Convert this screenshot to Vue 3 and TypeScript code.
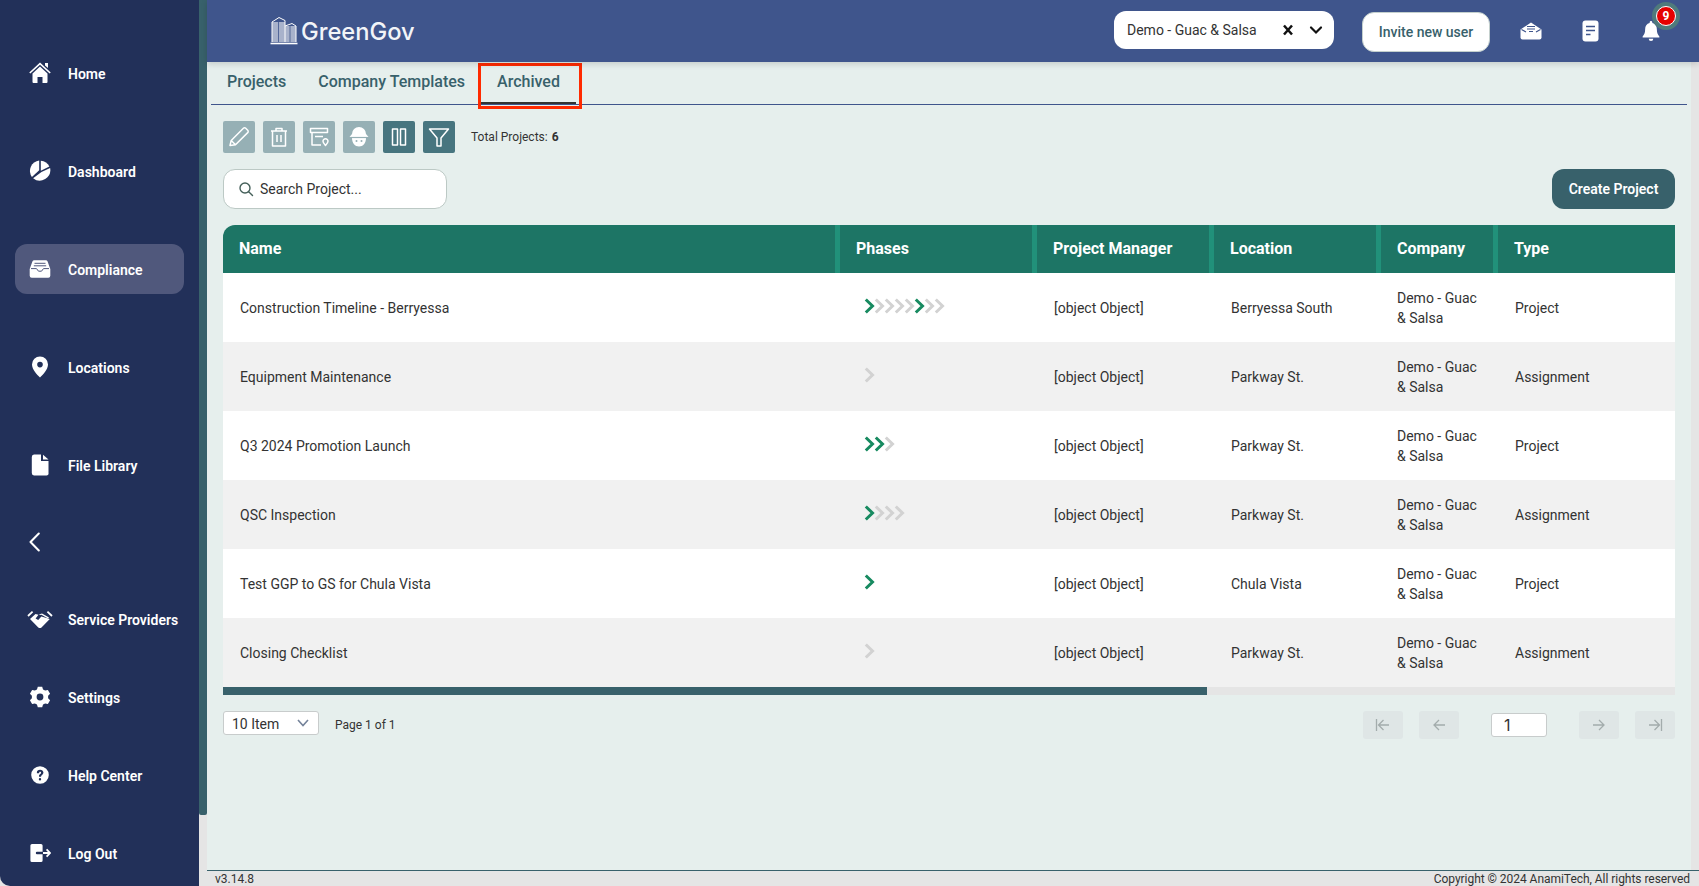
<script setup lang="ts">
type Shape = { d: string; kind?: 'fill' | 'stroke' };
type NavItem = { label: string; active?: boolean; w: number; h: number; shapes: Shape[] };
function gear(): string {
  const c = 11, out = 10.6, inn = 8.2;
  let d = '';
  const n = 6;
  for (let i = 0; i < n; i++) {
    const a = (i / n) * Math.PI * 2 - Math.PI / 2;
    const w = Math.PI / n;
    const pts = [
      [inn, a - w * 0.72], [out, a - w * 0.4], [out, a + w * 0.4], [inn, a + w * 0.72],
    ];
    for (const [r, t] of pts) {
      d += `${d ? 'L' : 'M'}${(c + r * Math.cos(t)).toFixed(2)} ${(c + r * Math.sin(t)).toFixed(2)}`;
    }
  }
  return d + 'Z';
}
const navTop: NavItem[] = [
  { label: 'Home', w: 22, h: 22, shapes: [
    { d: 'M3.5 11.6 11 4.6l7.5 7V20a1 1 0 0 1-1 1h-4v-6h-5v6h-4a1 1 0 0 1-1-1z' },
    { d: 'M.8 11 11 1.6 21.2 11', kind: 'stroke' },
    { d: 'M16 1h3v5l-3-2.6z' },
  ] },
  { label: 'Dashboard', w: 22, h: 22, shapes: [
    { d: 'M10.2 .5v9.8L2.9 17A10.5 10.5 0 0 1 10.2 .5z' },
    { d: 'M11.8 .7a10.5 10.5 0 0 1 8.6 5.9l-8.6 4.2z' },
    { d: 'M21.1 8a10.6 10.6 0 0 1-17 10.3l8.4-6.3z' },
  ] },
  { label: 'Compliance', active: true, w: 22, h: 18, shapes: [
    { d: 'M3.4 1.600A2 2 0 0 1 5.400 .2h11.200a2 2 0 0 1 2 1.400l2.700 7.400v6.800a2 2 0 0 1-2 2H2.700a2 2 0 0 1-2-2V9z' },
    { d: 'M5.500 3.300h11M4.800 5.800h12.400M2 8.600h5.500l2 2.600h3l2-2.600H20', kind: 'stroke' },
  ] },
  { label: 'Locations', w: 22, h: 22, shapes: [
    { d: 'M11 .5a8 8 0 0 1 8 8c0 5-5 10-8 13-3-3-8-8-8-13a8 8 0 0 1 8-8z M11 5.8a2.8 2.8 0 1 0 0 5.6 2.8 2.8 0 0 0 0-5.6z' },
  ] },
  { label: 'File Library', w: 22, h: 22, shapes: [
    { d: 'M5 .5h7v6.500h7.500V19a2 2 0 0 1-2 2.500H5A2.500 2.500 0 0 1 2.800 19V3A2.500 2.500 0 0 1 5 .5z' },
    { d: 'M14 .8l5.500 4.700H14z' },
  ] },
];
const navBottom: NavItem[] = [
  { label: 'Service Providers', w: 26, h: 20, shapes: [
    { d: 'M1 7 5.600 2.600M25 7l-4.600-4.400', kind: 'stroke' },
    { d: 'M3 10 8.500 5l3 .8L8.600 9.600l2.600 1.400 3.200-3.600L22.800 10 14.500 18.400a2.400 2.400 0 0 1-3.200 0z' },
    { d: 'M12.500 5.200 15 4.400l7 4-1 1-6.600-3.600-2 .2z' },
  ] },
  { label: 'Settings', w: 22, h: 22, shapes: [
    { d: gear() + ' M11 7.600a3.400 3.400 0 1 0 0 6.800 3.400 3.400 0 0 0 0-6.800z' },
  ] },
  { label: 'Help Center', w: 22, h: 22, shapes: [
    { d: 'M11 2.200a8.800 8.800 0 1 1 0 17.600 8.800 8.800 0 0 1 0-17.600z M7.900 9.200h2.200c0-1 .4-1.500 1-1.500s1 .4 1 1c0 .5-.3.8-.9 1.300-.9.7-1.300 1.300-1.200 2.800h2.100c0-.9.2-1.200.9-1.800.8-.7 1.400-1.300 1.400-2.400 0-1.900-1.500-2.900-3.300-2.900-2 0-3.200 1.200-3.200 2.500z M11 14a1.200 1.200 0 1 0 0 2.400 1.200 1.200 0 0 0 0-2.400z' },
  ] },
  { label: 'Log Out', w: 22, h: 20, shapes: [
    { d: 'M3 1h9a1.600 1.600 0 0 1 1.600 1.600V8.800H8a1.200 1.200 0 0 0 0 2.400h5.600v6.200A1.600 1.600 0 0 1 12 19H3a1.600 1.600 0 0 1-1.600-1.600V2.600A1.600 1.600 0 0 1 3 1z' },
    { d: 'M14 10h6.600M17.600 6.400 21 10l-3.400 3.600', kind: 'stroke' },
  ] },
];
type Row = { name: string; phases: number[]; location: string; type: string };
const rows: Row[] = [
  { name: 'Construction Timeline - Berryessa', phases: [1, 0, 0, 0, 0, 1, 0, 0], location: 'Berryessa South', type: 'Project' },
  { name: 'Equipment Maintenance', phases: [0], location: 'Parkway St.', type: 'Assignment' },
  { name: 'Q3 2024 Promotion Launch', phases: [1, 1, 0], location: 'Parkway St.', type: 'Project' },
  { name: 'QSC Inspection', phases: [1, 0, 0, 0], location: 'Parkway St.', type: 'Assignment' },
  { name: 'Test GGP to GS for Chula Vista', phases: [1], location: 'Chula Vista', type: 'Project' },
  { name: 'Closing Checklist', phases: [0], location: 'Parkway St.', type: 'Assignment' },
];
const tools: { on: boolean; d: string }[] = [
  { on: false, d: 'M5 22.500l1.200-5L18.400 5.300a1.600 1.600 0 0 1 2.300 0l2 2a1.600 1.600 0 0 1 0 2.300L10.500 21.800zM6.200 17.500l4.300 4.300' },
  { on: false, d: 'M6 8h16M11 8V5.500h6V8M7.500 8v15h13V8M12 12v7M16 12v7' },
  { on: false, d: 'M5.500 5.500h17v4h-17zM7 9.500V22h9M10 13.500h8M23 18.300a2.500 2.500 0 1 0-5 0c0 1.600 2.500 4.200 2.500 4.200s2.500-2.600 2.500-4.200z' },
  { on: false, d: '' },
  { on: true, d: 'M7.500 6h5v16h-5zM15.500 6h5v16h-5z' },
  { on: true, d: 'M4.500 6h19l-7.500 9v8h-4v-8z' },
];
const columns = ['Name', 'Phases', 'Project Manager', 'Location', 'Company', 'Type'];
const logoLinesLeft = [7, 9, 11, 13, 15, 17, 19, 21, 23, 25];
const logoLinesRight = [11, 13, 15, 17, 19, 21, 23, 25];
</script>

<template>
  <div class="app">
    <aside class="sidebar">
      <nav class="nav-top">
        <a v-for="item in navTop" :key="item.label" class="nav-item" :class="{ active: item.active }">
          <span class="nav-icon">
            <svg :width="item.w" :height="item.h" :viewBox="`0 0 ${item.w} ${item.h}`">
              <path v-for="(s, i) in item.shapes" :key="i" :d="s.d" fill-rule="evenodd"
                :fill="s.kind === 'stroke' ? 'none' : '#fff'"
                :stroke="s.kind === 'stroke' ? (item.active ? '#50587c' : '#fff') : 'none'"
                :stroke-width="item.active ? 1 : 1.6" />
            </svg>
          </span>
          <span class="nav-label">{{ item.label }}</span>
        </a>
      </nav>
      <div class="collapse">
        <svg width="12" height="20" viewBox="0 0 12 20"><path d="M10.800 1.500 2.500 10l8.300 8.500" fill="none" stroke="#fff" stroke-width="2" stroke-linecap="round" stroke-linejoin="round" /></svg>
      </div>
      <nav class="nav-bottom">
        <a v-for="item in navBottom" :key="item.label" class="nav-item">
          <span class="nav-icon">
            <svg :width="item.w" :height="item.h" :viewBox="`0 0 ${item.w} ${item.h}`">
              <path v-for="(s, i) in item.shapes" :key="i" :d="s.d" fill-rule="evenodd"
                :fill="s.kind === 'stroke' ? 'none' : '#fff'"
                :stroke="s.kind === 'stroke' ? '#fff' : 'none'" stroke-width="1.8" />
            </svg>
          </span>
          <span class="nav-label">{{ item.label }}</span>
        </a>
      </nav>
    </aside>
    <div class="rail"><div class="rail-thumb"></div></div>

    <div class="right">
      <header class="topbar">
        <div class="brand">
          <svg width="28" height="30" viewBox="0 0 28 30" fill="none" stroke="#fff">
            <path d="M2 26V6l7-4.500 6 3V26M15 10l7-2.500 4 2.500v16" stroke-width="1" />
            <path v-for="y in logoLinesLeft" :key="'l' + y" :d="`M2 ${y}h13`" stroke-width="1.100" />
            <path v-for="y in logoLinesRight" :key="'r' + y" :d="`M15 ${y}h11`" stroke-width="1.100" />
            <path d="M8.500 5v21M20 10v16" stroke="#3f558c" stroke-width=".8" />
            <path d="M.5 27.500h27" stroke-width="1.600" />
          </svg>
          <span>GreenGov</span>
        </div>
        <div class="top-actions">
          <div class="org-select">
            <span class="org-name">Demo - Guac &amp; Salsa</span>
            <svg width="12" height="12" viewBox="0 0 12 12"><path d="M2 1.500l8 9M10 1.500l-8 9" stroke="#111" stroke-width="2.500" /></svg>
            <svg width="14" height="10" viewBox="0 0 14 10"><path d="M2 2.500l5 5 5-5" fill="none" stroke="#111" stroke-width="2.200" stroke-linecap="round" /></svg>
          </div>
          <button class="invite">Invite new user</button>
          <svg class="top-icon mail" width="22" height="18" viewBox="0 0 22 18">
            <path fill="#fff" d="M.5 7.500 11 .5l10.500 7v8a2 2 0 0 1-2 2h-17a2 2 0 0 1-2-2z" />
            <path fill="none" stroke="#3f558c" stroke-width="1.100" d="M7 4.500h8M7 7h8M9 9.500h4M1.500 7.500 6 10M20.500 7.500 16 10" />
          </svg>
          <svg class="top-icon doc" width="17" height="22" viewBox="0 0 17 22">
            <rect x=".5" y=".5" width="16" height="21" rx="3" fill="#fff" />
            <path stroke="#3f558c" stroke-width="1.600" d="M4 6.500h9M4 10.500h9M4 14.500h4.500" />
          </svg>
          <div class="bell">
            <svg width="18" height="22" viewBox="0 0 20 24">
              <path fill="#fff" d="M10 1a1.500 1.500 0 0 1 1.500 1.500v.7C14.800 4 16.500 6.600 16.500 10c0 4 1 6 2.800 8v1.200H.7V18c1.800-2 2.800-4 2.800-8 0-3.400 1.700-6 5-6.800v-.7A1.500 1.500 0 0 1 10 1z" />
              <path fill="#fff" d="M7.500 20.500h5a2.500 2.500 0 0 1-5 0z" />
            </svg>
            <span class="badge">9</span>
          </div>
        </div>
      </header>

      <div class="body">
        <main class="content">
          <div class="tabs">
            <div class="tab">Projects</div>
            <div class="tab">Company Templates</div>
            <div class="tab current">Archived<i class="callout"></i></div>
          </div>

          <div class="toolbar">
            <button v-for="(t, i) in tools" :key="i" class="tool" :class="{ on: t.on }">
              <svg v-if="t.d" width="28" height="28" viewBox="0 0 28 28"><path :d="t.d" fill="none" stroke="#fff" stroke-width="1.500" stroke-linejoin="round" /></svg>
              <svg v-else width="28" height="28" viewBox="0 0 28 28">
                <path fill="#fff" d="M7 11a7 7 0 0 1 14 0l2.500 3H4.500z" />
                <path fill="#fff" d="M7 15h14c0 5-3 8.500-7 8.500S7 20 7 15z" />
                <path stroke="#96b0b5" stroke-width="1.200" d="M5 14.500h18" />
                <circle cx="11.500" cy="18" r="1" fill="#96b0b5" /><circle cx="16.500" cy="18" r="1" fill="#96b0b5" />
              </svg>
            </button>
            <span class="total">Total Projects:<b>6</b></span>
          </div>

          <div class="search-row">
            <label class="search">
              <svg width="16" height="16" viewBox="0 0 16 16" fill="none" stroke="#45605a" stroke-width="1.400"><circle cx="7" cy="7" r="5" /><path d="M10.700 10.700 14.500 14.500" stroke-linecap="round" /></svg>
              <span>Search Project...</span>
            </label>
            <button class="create">Create Project</button>
          </div>

          <div class="table">
            <div class="thead trow">
              <div v-for="c in columns" :key="c" class="th">{{ c }}</div>
            </div>
            <div v-for="r in rows" :key="r.name" class="trow tr">
              <div class="td">{{ r.name }}</div>
              <div class="td phases">
                <svg v-for="(p, i) in r.phases" :key="i" class="chev" width="11" height="16" viewBox="0 0 11 16">
                  <path d="M1.800 1.500 8.500 8l-6.700 6.500" fill="none" :stroke="p ? '#178a60' : '#d2d2d2'" stroke-width="3" />
                </svg>
              </div>
              <div class="td">[object Object]</div>
              <div class="td">{{ r.location }}</div>
              <div class="td company">Demo - Guac &amp; Salsa</div>
              <div class="td">{{ r.type }}</div>
            </div>
            <div class="hscroll"><div class="hthumb"></div></div>
          </div>

          <div class="pager">
            <div class="pager-left">
              <div class="size">
                <span class="size-text">10 Item</span>
                <svg width="12" height="8" viewBox="0 0 12 8"><path d="M1 1l5 5.500L11 1" fill="none" stroke="#74839a" stroke-width="1.600" /></svg>
              </div>
              <span class="page-of">Page 1 of 1</span>
            </div>
            <div class="pager-right">
              <button class="pg"><svg width="16" height="14" viewBox="0 0 16 14"><path d="M1.500 1v12M14 7H4M8.500 2 3.500 7l5 5" class="pg-s" /></svg></button>
              <button class="pg"><svg width="16" height="14" viewBox="0 0 16 14"><path d="M14 7H3M8 2 3 7l5 5" class="pg-s" /></svg></button>
              <div class="page-input">1</div>
              <button class="pg"><svg width="16" height="14" viewBox="0 0 16 14"><path d="M2 7h11M8 2l5 5-5 5" class="pg-s" /></svg></button>
              <button class="pg"><svg width="16" height="14" viewBox="0 0 16 14"><path d="M14.500 1v12M2 7h10M7.500 2l5 5-5 5" class="pg-s" /></svg></button>
            </div>
          </div>
        </main>
        <div class="vscroll"></div>
      </div>

      <footer class="footer">
        <span>v3.14.8</span>
        <span class="copy">Copyright © 2024 AnamiTech, All rights reserved</span>
      </footer>
    </div>
  </div>
</template>

<style>
html, body { margin: 0; background: #e5e5e5; }
</style>

<style scoped>
.app { display: flex; width: 1699px; height: 886px; overflow: hidden; font-family: Roboto, sans-serif; color: #333; }
button { font-family: inherit; border: 0; padding: 0; }

.sidebar { width: 199px; flex: none; background: #223059; border-bottom-left-radius: 10px; padding: 48px 15px 0; box-sizing: border-box; display: flex; flex-direction: column; color: #fff; }
.nav-top { display: flex; flex-direction: column; gap: 48px; }
.nav-bottom { display: flex; flex-direction: column; gap: 28px; }
.nav-item { height: 50px; border-radius: 12px; display: flex; align-items: center; font-size: 14px; font-weight: 600; color: #fff; }
.nav-item.active { background: #50587c; }
.nav-icon { width: 53px; flex: none; padding: 0 4px 0 1px; box-sizing: border-box; display: flex; justify-content: center; }
.nav-label { padding-top: 1px; }
.collapse { height: 50px; margin: 27px 0; display: flex; align-items: center; padding-left: 13px; }

.rail { width: 8px; flex: none; background: #e5e5e5; }
.rail-thumb { height: 815px; background: #38616b; border-radius: 0 0 2px 2px; }

.right { flex: 1; min-width: 0; display: flex; flex-direction: column; }
.topbar { height: 62px; flex: none; background: #3f558c; display: flex; align-items: center; justify-content: space-between; box-shadow: 0 2px 6px rgba(0, 0, 0, .15); position: relative; z-index: 1; }
.brand { display: flex; align-items: center; gap: 3px; margin-left: 63px; color: #f2f4f8; font-family: Inter, sans-serif; font-size: 23.7px; font-weight: 500; }
.top-actions { display: flex; align-items: center; margin-right: 39px; }
.org-select { width: 220px; height: 38px; margin-top: -2px; box-sizing: border-box; background: #fff; border-radius: 12px; display: flex; align-items: center; padding: 0 11px 0 13px; font-size: 14px; }
.org-name { flex: 1; }
.org-select svg + svg { margin-left: 15px; }
.invite { width: 128px; height: 40px; margin: 2px 0 0 28px; background: #fff; border: 1px solid #c4d0cd; border-radius: 12px; color: #38616b; font-size: 14px; font-weight: 500; }
.top-icon.mail { margin-left: 30px; }
.top-icon.doc { margin-left: 40px; }
.bell { margin-left: 43px; width: 18px; height: 22px; position: relative; display: flex; }
.badge { position: absolute; left: 14px; top: -14px; width: 20px; height: 20px; box-sizing: border-box; border-radius: 50%; background: #e60000; border: 1px solid #fff; box-shadow: 0 0 0 4px #4f7a7c; color: #fff; font-size: 12px; font-weight: 700; display: flex; align-items: center; justify-content: center; }

.body { flex: 1; min-height: 0; display: flex; }
.content { flex: 1; min-width: 0; background: #e6efed; padding: 0 16px; box-sizing: border-box; }
.vscroll { width: 8px; background: #e5e5e5; flex: none; }

.tabs { display: flex; margin: 0 -12px; height: 42px; border-bottom: 1px solid #3f558c; }
.tab { padding: 10px 16px 0; height: 42px; box-sizing: border-box; font-size: 16px; font-weight: 500; color: #38616b; position: relative; }
.tab.current { box-shadow: inset 0 -2px 0 #333; }
.callout { position: absolute; left: -3px; right: -6px; top: 1px; height: 46px; border: 3px solid #ff2a00; box-sizing: border-box; }

.toolbar { display: flex; align-items: center; gap: 8px; margin-top: 16px; }
.tool { width: 32px; height: 32px; border-radius: 2px; background: #96b0b5; display: flex; align-items: center; justify-content: center; }
.tool.on { background: #47757f; }
.total { margin-left: 8px; font-size: 12px; color: #333; }
.total b { margin-left: 4px; font-weight: 700; }

.search-row { display: flex; justify-content: space-between; margin-top: 16px; }
.search { width: 224px; height: 40px; box-sizing: border-box; background: #fff; border: 1px solid #bcc9c5; border-radius: 12px; display: flex; align-items: center; gap: 6px; padding-left: 14px; font-size: 14px; }
.create { width: 123px; height: 40px; border-radius: 12px; background: #38616b; color: #fff; font-size: 14px; font-weight: 600; }

.table { margin-top: 16px; }
.trow { display: grid; grid-template-columns: 617px 197px 177px 167px 117px 177px; }
.thead { height: 48px; background: #1d7565; border-radius: 12px 0 0 0; color: #fff; }
.th { display: flex; align-items: center; padding: 0 0 2px 16px; font-size: 16px; font-weight: 700; box-shadow: inset -5px 0 0 #21917a; }
.th:last-child { box-shadow: none; }
.tr { height: 69px; background: #fff; }
.tr:nth-of-type(odd) { background: #f1f1f1; }
.td { display: flex; align-items: center; padding: 0 16px 0 17px; font-size: 14px; line-height: 20px; }
.td:nth-child(2) { padding-left: 24px; padding-bottom: 3px; }
.td:nth-child(5) { padding-left: 16px; padding-right: 12px; }
.chev { margin-right: -1px; flex: none; }
.hscroll { height: 8px; background: #e5e5e5; }
.hthumb { width: 984px; height: 8px; background: #38616b; }

.pager { display: flex; justify-content: space-between; margin-top: 16px; }
.pager-left { display: flex; align-items: flex-start; }
.size { width: 96px; height: 24px; box-sizing: border-box; background: #fff; border: 1px solid #c8cccc; border-radius: 3px; display: flex; align-items: center; justify-content: space-between; padding: 0 9px 0 8px; font-size: 14px; }
.size-text { padding-top: 1px; }
.page-of { margin-left: 16px; margin-top: 7px; font-size: 12px; }
.pager-right { display: flex; gap: 16px; align-items: flex-start; }
.pg { width: 40px; height: 28px; border-radius: 3px; background: #dfe6e6; display: flex; align-items: center; justify-content: center; }
.pg-s { fill: none; stroke: #a3acac; stroke-width: 1.3; }
.page-input { width: 56px; height: 24px; margin: 2px 16px; box-sizing: border-box; background: #fff; border: 1px solid #c8cccc; border-radius: 3px; font-family: Inter, sans-serif; font-size: 16px; line-height: 22px; padding-left: 12px; }

.footer { height: 16px; flex: none; box-sizing: border-box; border-top: 1px solid #38616b; background: #e5e5e5; display: flex; justify-content: space-between; padding: 0 9px 0 8px; font-size: 12px; line-height: 16px; color: #333; }
.copy { letter-spacing: -0.04px; }
</style>
